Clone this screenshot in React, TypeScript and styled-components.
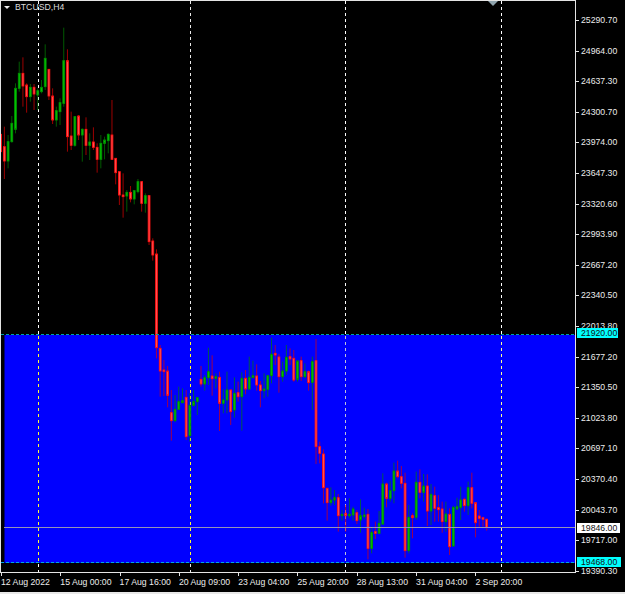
import React from 'react';
import styled, { createGlobalStyle } from 'styled-components';

const Global = createGlobalStyle`
  html, body { margin: 0; padding: 0; background: #ffffff; }
`;

const Terminal = styled.div`
  width: 625px;
  height: 594px;
  overflow: hidden;
  display: grid;
  grid-template-columns: 576px 49px;
  grid-template-rows: 573px 19px 2px;
  background: #000;
  font-family: "Liberation Sans", Arial, sans-serif;
  font-size: 8.7px;
  color: #ececec;
`;

const Plot = styled.div`
  position: relative;
  grid-column: 1;
  grid-row: 1;
  box-sizing: border-box;
  border: 1px solid #e4e4e4;
  background: #000;
  svg { display: block; }
`;

const Title = styled.div`
  position: absolute;
  left: 3px;
  top: 1px;
  display: flex;
  align-items: center;
  gap: 5px;
  line-height: 11px;
  color: #dcdcdc;
`;

const Caret = styled.span`
  width: 0;
  height: 0;
  border-left: 3px solid transparent;
  border-right: 3px solid transparent;
  border-top: 3px solid #f0f0f0;
`;

const PriceAxis = styled.div`
  position: relative;
  grid-column: 2;
  grid-row: 1;
  padding-top: 15px;
  display: grid;
  grid-auto-rows: 30.6px;
`;

const PriceRow = styled.div`
  display: flex;
  align-items: flex-start;
  gap: 2px;
  line-height: 11px;
  height: 11px;
  &::before {
    content: "";
    width: 3px;
    height: 1px;
    margin-top: 5px;
    background: #e4e4e4;
  }
`;

const PriceText = styled.span`
  white-space: nowrap;
`;

const Tag = styled.div<{ $top: number; $bg: string; $w: number }>`
  position: absolute;
  left: 1px;
  top: ${p => p.$top}px;
  width: ${p => p.$w}px;
  height: 10px;
  line-height: 10px;
  padding-left: 4px;
  box-sizing: border-box;
  background: ${p => p.$bg};
  color: #111;
`;

const TimeAxis = styled.div`
  grid-column: 1 / 3;
  grid-row: 2;
  display: grid;
  grid-template-columns: repeat(9, 59.3px);
  justify-content: start;
  padding-left: 1px;
`;

const TimeCell = styled.div`
  position: relative;
  padding-top: 3px;
  line-height: 12px;
  white-space: nowrap;
  &::before {
    content: "";
    position: absolute;
    left: 0;
    top: 0;
    width: 1px;
    height: 3px;
    background: #e4e4e4;
  }
`;

const BottomEdge = styled.div`
  grid-column: 1 / 3;
  grid-row: 3;
  background: #e8e8e8;
`;

type C = [number, number, number, number, number, number];

const toReal = (rows: number[][], oy: number): C[] =>
  rows.map(r => [r[0], oy + r[1] / 3, oy + r[2] / 3, oy + r[3] / 3, oy + r[4] / 3, 0] as C);

// dir (1 up/green, 0 down/red), wick top, body top, body bottom, wick bottom — in crop coordinates
const first = toReal([
  [0,403,403,455,455],[0,380,440,483,537],[1,405,425,483,505],[1,348,370,425,428],[1,250,265,388,400],
  [1,185,220,265,275],[0,172,220,258,320],[0,250,255,290,338],[1,252,262,290,305],[0,252,262,282,330],
  [1,265,272,285,330],[1,240,262,275,280],[1,133,175,260,270],[0,208,208,288,300],[0,265,288,360,372],
  [1,320,332,360,380],[1,295,308,335,375],[1,83,182,310,320],[0,148,182,410,455],[0,335,408,436,450],
  [1,348,350,436,440],[0,345,348,405,420],[1,385,388,405,485],[0,352,388,436,465],[1,400,426,436,480],
  [0,382,426,442,450],[0,430,442,478,518],[1,405,430,478,505],[1,410,420,430,478],[1,400,403,422,460],
  [0,300,405,478,480],
], 0);

const second = toReal([
  [0,-35,-35,8,43],[0,5,5,75,105],[0,10,75,80,143],[1,60,67,78,125],[0,48,67,87,97],[1,60,62,87,103],
  [1,27,35,65,70],[0,33,35,100,125],[1,70,77,100,128],[0,75,77,215,225],[0,205,213,255,272],[0,238,252,533,565],
  [0,525,535,603,680],[0,570,600,605,678],[0,588,603,676,712],[0,660,728,752,812],[1,675,718,752,757],
  [1,650,695,718,718],[1,655,692,698,700],[0,660,682,800,810],[1,670,706,797,815],[1,660,695,706,710],
  [1,682,683,695,735],[0,588,628,642,650],[1,615,623,642,662],[1,533,605,623,645],[0,556,618,626,677],
  [1,610,620,625,655],[0,605,622,700,783],[1,658,690,700,730],[1,605,660,690,730],[0,658,660,725,765],
  [1,622,670,720,743],[0,635,668,680,695],[1,607,625,680,782],[0,600,625,657,673],[1,560,622,657,660],
  [1,572,617,623,625],[0,583,618,645,662],[0,633,645,662,712],[1,610,657,662,685],[1,615,617,658,680],
  [1,503,553,617,640],[0,525,550,555,585],[0,552,561,620,668],[1,575,603,620,635],[1,525,562,603,615],
  [0,535,560,567,585],[0,540,565,630,635],[1,570,573,628,635],
], 170);

const third = toReal([
  [0,80,92,140,153],[1,100,125,140,145],[0,122,125,158,182],[1,80,95,157,240],[0,27,92,350,402],
  [0,335,350,370,400],[0,358,372,473,520],[0,473,475,518,572],[1,472,510,518,527],[1,480,503,510,525],
  [0,492,503,557,605],[1,540,553,557,572],[0,525,550,557,605],[1,505,553,557,565],[1,530,537,555,572],
  [0,540,548,572,582],[1,508,557,570,608],[1,533,555,560,568],[0,537,553,655,688],[1,590,607,655,670],
  [0,575,605,610,627],[1,543,580,610,610],[1,430,462,582,585],[0,458,462,505,532],[1,452,482,505,515],
  [1,398,423,482,520],[0,392,423,440,445],[0,408,440,460,475],[0,428,460,662,683],[1,525,562,662,670],
  [0,550,557,563,625],[1,425,457,562,570],[0,418,457,487,505],[1,432,468,487,515],[0,433,468,543,588],
  [1,462,493,543,585],[0,470,497,535,575],[0,495,533,539,575],[0,515,537,575,608],[1,515,552,575,605],
  [0,535,553,650,675],[1,527,532,648,650],[1,503,530,537,540],[1,470,510,532,570],[0,503,508,527,545],
  [1,455,473,527,555],[0,428,473,520,535],[0,517,518,578,622],[0,540,558,565,590],[0,560,563,568,590],
  [0,565,568,592,602],
], 330);

const candles: C[] = [...first, ...second, ...third];

const BAR_STEP = 3.71;
const BAR_START = 0.67;

const Wick = styled.line<{ $up: number }>`
  stroke: ${p => (p.$up ? '#008000' : '#e00000')};
  stroke-width: 1;
  stroke-opacity: 0.7;
`;

const Body = styled.rect<{ $up: number }>`
  fill: ${p => (p.$up ? '#00c800' : '#ff5a5a')};
  stroke: ${p => (p.$up ? '#009000' : '#ff1010')};
  stroke-width: 0.9;
`;

const VLine = styled.line<{ $c: string }>`
  stroke: ${p => p.$c};
  stroke-width: 1;
  stroke-dasharray: 3 3;
`;

const Chart: React.FC = () => (
  <svg width={574} height={571} viewBox="1 1 574 571">
    <rect x={4.5} y={335} width={572} height={228} fill="#0000ff" />
    {[
      { x: 38.5, top: '#ffffff', mid: '#ffff30' },
      { x: 190.5, top: '#e8e8e8', mid: '#ffff30' },
      { x: 345.5, top: '#ffffff', mid: '#c0c0d8' },
      { x: 501.5, top: '#ffffff', mid: '#ffff90' },
    ].map(l => (
      <g key={l.x}>
        <VLine $c={l.top} x1={l.x} x2={l.x} y1={1} y2={334} />
        <VLine $c={l.mid} x1={l.x} x2={l.x} y1={336} y2={562} />
        <VLine $c={l.top} x1={l.x} x2={l.x} y1={564} y2={572} />
      </g>
    ))}
    {candles.map((c, i) => {
      const x = BAR_START + BAR_STEP * i;
      return (
        <g key={i}>
          <Wick $up={c[0]} x1={x} x2={x} y1={c[1]} y2={c[4]} />
          <Body $up={c[0]} x={x - 0.9} y={c[2]} width={1.8} height={Math.max(c[3] - c[2], 0.6)} />
        </g>
      );
    })}
    <line x1={4} x2={576} y1={527.5} y2={527.5} stroke="#9494b8" strokeWidth={1} />
    <line x1={1} x2={576} y1={334.5} y2={334.5} stroke="#00a0a0" strokeWidth={1.2} strokeDasharray="3 2" />
    <line x1={1} x2={576} y1={562.5} y2={562.5} stroke="#00a8e0" strokeWidth={1.2} strokeDasharray="3 2" />
    <polygon points="488,1 498,1 493,6" fill="#8fa3ad" />
  </svg>
);

const prices = [
  '25290.70','24964.00','24637.30','24300.70','23974.00','23647.30','23320.60','22993.90','22667.20',
  '22340.50','22013.80','21677.20','21350.50','21023.80','20697.10','20370.40','20043.70','19717.00','19390.30',
];

const times = [
  '12 Aug 2022','15 Aug 00:00','17 Aug 16:00','20 Aug 09:00','23 Aug 04:00',
  '25 Aug 20:00','28 Aug 13:00','31 Aug 04:00','2 Sep 20:00',
];

export default function App() {
  return (
    <>
      <Global />
      <Terminal>
        <Plot>
          <Chart />
          <Title><Caret />BTCUSD,H4</Title>
        </Plot>
        <PriceAxis>
          {prices.map(p => (
            <PriceRow key={p}><PriceText>{p}</PriceText></PriceRow>
          ))}
          <Tag $top={328} $bg="#00ffff" $w={41}>21920.00</Tag>
          <Tag $top={523} $bg="#ffffff" $w={43}>19846.00</Tag>
          <Tag $top={557} $bg="#00ffff" $w={44}>19468.00</Tag>
        </PriceAxis>
        <TimeAxis>
          {times.map(t => <TimeCell key={t}>{t}</TimeCell>)}
        </TimeAxis>
        <BottomEdge />
      </Terminal>
    </>
  );
}
